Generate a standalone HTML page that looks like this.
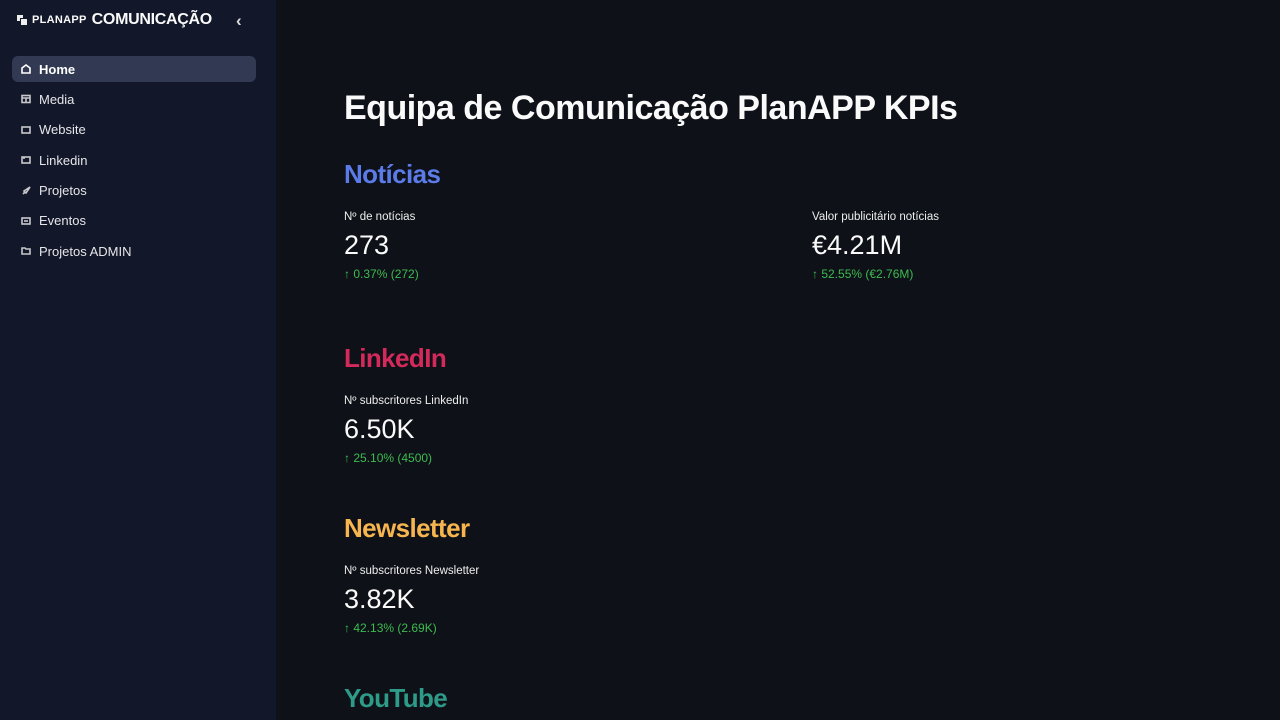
<!DOCTYPE html>
<html><head><meta charset="utf-8"><style>
*{margin:0;padding:0;box-sizing:border-box}
body{width:1280px;height:720px;overflow:hidden;background:#0e1117;font-family:"Liberation Sans",sans-serif;color:#fafafa;position:relative}
.side{position:absolute;left:0;top:0;width:276px;height:720px;background:#121729}
.logo{position:absolute;left:16px;top:11px;font-size:16px;font-weight:bold;white-space:nowrap;display:flex;align-items:center;letter-spacing:-.3px}
.logo .p{font-size:11px;letter-spacing:.3px;margin:0 5px 0 4px;font-weight:bold}
.chev{position:absolute;left:236px;top:11px;font-size:17px;color:#ddd;font-weight:bold}
.nav{position:absolute;left:12px;top:56px;width:244px}
.it{height:26px;margin-bottom:4.4px;border-radius:6px;display:flex;align-items:center;padding-left:9px;font-size:13px;color:#e6e6ea}
.it.a{background:#313a52;font-weight:bold;color:#fff}
.it svg{width:10px;height:10px;margin-right:8px;fill:none;stroke:#c8c8cc;stroke-width:1.6}
.main{position:absolute;left:344px}
h1{position:absolute;top:89px;font-size:34px;font-weight:bold;white-space:nowrap;letter-spacing:-.5px}
h2{position:absolute;font-size:26px;font-weight:bold;white-space:nowrap;letter-spacing:-.6px;top:0}
.m{position:absolute;white-space:nowrap}
.m .l{font-size:11.5px;color:#eee}
.m .v{font-size:27px;margin-top:7px}
.m .d{font-size:12px;color:#3dbb50;margin-top:6px}
</style></head><body>
<div class="side">
<div class="logo"><svg width="12" height="12" viewBox="0 0 12 12"><path d="M1 1h6v3H4v3H1z M5 5h6v6H5z" fill="#eee"/></svg><span class="p">PLANAPP</span>COMUNICAÇÃO</div>
<div class="chev">‹</div>
<div class="nav">
<div class="it a"><svg viewBox="0 0 10 10"><path d="M1 9V4l4-3 4 3v5z" stroke="#fff"/></svg>Home</div>
<div class="it"><svg viewBox="0 0 10 10"><rect x="1" y="1.5" width="8" height="7"/><path d="M1 4h8M5 4v4.5"/></svg>Media</div>
<div class="it"><svg viewBox="0 0 10 10"><rect x="1" y="2" width="8" height="6"/></svg>Website</div>
<div class="it"><svg viewBox="0 0 10 10"><rect x="1" y="2" width="8" height="6"/><path d="M3 2v2"/></svg>Linkedin</div>
<div class="it"><svg viewBox="0 0 10 10"><path d="M2 8l2-2M3 5l2 2 4-6-6 4z"/></svg>Projetos</div>
<div class="it"><svg viewBox="0 0 10 10"><rect x="1" y="2" width="8" height="6"/><path d="M3 5h4"/></svg>Eventos</div>
<div class="it"><svg viewBox="0 0 10 10"><path d="M1 2h3l1 1h4v5H1z"/></svg>Projetos ADMIN</div>
</div></div>
<div class="main">
<h1>Equipa de Comunicação PlanAPP KPIs</h1>
<h2 style="top:159px;color:#5b7be9">Notícias</h2>
<div class="m" style="top:211px"><div class="l">Nº de notícias</div><div class="v">273</div><div class="d">↑ 0.37% (272)</div></div>
<div class="m" style="top:211px;left:468px"><div class="l">Valor publicitário notícias</div><div class="v">€4.21M</div><div class="d">↑ 52.55% (€2.76M)</div></div>
<h2 style="top:343px;color:#d42a5b">LinkedIn</h2>
<div class="m" style="top:395px"><div class="l">Nº subscritores LinkedIn</div><div class="v">6.50K</div><div class="d">↑ 25.10% (4500)</div></div>
<h2 style="top:513px;color:#f6b54e">Newsletter</h2>
<div class="m" style="top:565px"><div class="l">Nº subscritores Newsletter</div><div class="v">3.82K</div><div class="d">↑ 42.13% (2.69K)</div></div>
<h2 style="top:683px;color:#2e9a88">YouTube</h2>
</div>
</body></html>
